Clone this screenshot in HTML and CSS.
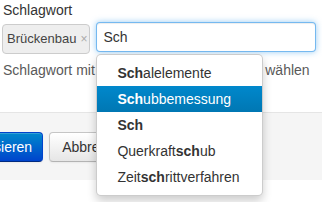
FILE: index.html
```html
<!DOCTYPE html>
<html lang="de">
<head>
<meta charset="utf-8">
<link rel="stylesheet" href="styles.css">
</head>
<body>
<div class="form">
  <label class="label">Schlagwort</label>
  <div class="row">
    <span class="tag">Brückenbau<span class="tag-x">×</span></span>
    <div class="field">
      <input class="input" type="text" value="Sch">
      <ul class="menu">
        <li><a><strong>Sch</strong>alelemente</a></li>
        <li class="active"><a><strong>Sch</strong>ubbemessung</a></li>
        <li><a><strong>Sch</strong></a></li>
        <li><a>Querkraft<strong>sch</strong>ub</a></li>
        <li><a>Zeit<strong>sch</strong>rittverfahren</a></li>
      </ul>
    </div>
  </div>
  <p class="help">Schlagwort mit den Pfeiltasten oder Maus wählen</p>
</div>
<div class="footer">
  <button class="btn btn-primary">Aktualisieren</button>
  <button class="btn">Abbrechen</button>
</div>
</body>
</html>
```
FILE: styles.css
```css
html, body {
  margin: 0;
  padding: 0;
  background: #fff;
}
body {
  font-family: "Liberation Sans", Arial, sans-serif;
  font-size: 14px;
  line-height: 20px;
  color: #333;
  width: 322px;
  height: 202px;
  overflow: hidden;
}
.form {
  padding: 0 2px;
}
.label {
  display: block;
  height: 20px;
  padding-left: 1px;
  margin-bottom: 2px;
}
.row {
  display: flex;
  align-items: flex-start;
  gap: 6px;
  padding-right: 4px;
}
.tag {
  display: inline-flex;
  align-items: center;
  margin-top: 2px;
  height: 28px;
  padding: 0 2px 0 4px;
  border: 1px solid #ccc;
  border-radius: 4px;
  background: #eee;
  font-size: 13px;
  color: #444;
  white-space: nowrap;
}
.tag-x {
  margin-left: 4px;
  color: #aaa;
  font-size: 12px;
}
.field {
  position: relative;
  flex: 1;
}
.input {
  display: block;
  box-sizing: border-box;
  width: 100%;
  height: 30px;
  margin: 0;
  padding: 4px 6px;
  font-family: inherit;
  font-size: 14px;
  line-height: 20px;
  color: #333;
  border: 1px solid rgba(82, 168, 236, 0.8);
  border-radius: 4px;
  outline: none;
  box-shadow: inset 0 1px 1px rgba(0, 0, 0, 0.075), 0 0 6px rgba(82, 168, 236, 0.6);
}
.menu {
  position: absolute;
  left: 0;
  top: 32px;
  width: 165px;
  margin: 0;
  padding: 5px 0;
  list-style: none;
  background: #fff;
  border: 1px solid rgba(0, 0, 0, 0.2);
  border-radius: 5px;
  box-shadow: 0 5px 10px rgba(0, 0, 0, 0.2);
  z-index: 10;
}
.menu a {
  display: block;
  padding: 3px 20px;
  line-height: 20px;
  color: #333;
  white-space: nowrap;
}
.menu .active a {
  color: #fff;
  background: linear-gradient(#0088cc, #0077b3);
}
.help {
  margin: 6px 0 0;
  padding-left: 1px;
  color: #595959;
  white-space: nowrap;
}
.footer {
  margin-top: 32px;
  border-top: 1px solid #e5e5e5;
  background: #f5f5f5;
  display: flex;
  align-items: flex-start;
  gap: 6px;
  padding-top: 19px;
  box-sizing: border-box;
  height: 68px;
}
.btn {
  box-sizing: border-box;
  height: 30px;
  padding: 4px 12px;
  font-family: inherit;
  font-size: 14px;
  line-height: 20px;
  color: #333;
  border: 1px solid #c5c5c5;
  border-bottom-color: #b3b3b3;
  border-radius: 4px;
  background: linear-gradient(#ffffff, #e6e6e6);
  box-shadow: inset 0 1px 0 rgba(255, 255, 255, 0.2), 0 1px 2px rgba(0, 0, 0, 0.05);
  white-space: nowrap;
}
.btn-primary {
  margin-left: -61px;
  padding-right: 10px;
  color: #fff;
  border-color: #0044cc #0044cc #002a80;
  background: linear-gradient(#0088cc, #0044cc);
}
```
